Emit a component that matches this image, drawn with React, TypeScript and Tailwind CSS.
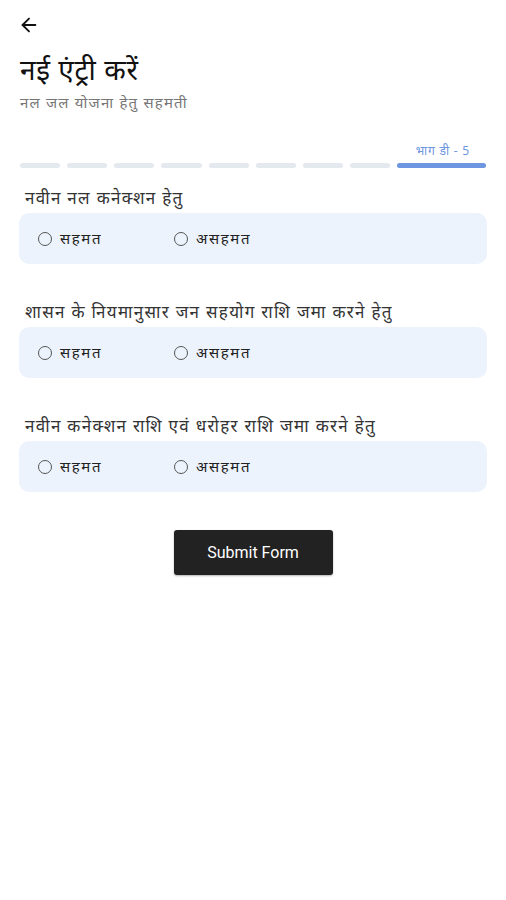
import { ArrowLeft } from "lucide-react";

const questions = [
  "नवीन नल कनेक्शन हेतु",
  "शासन के नियमानुसार जन सहयोग राशि जमा करने हेतु",
  "नवीन कनेक्शन राशि एवं धरोहर राशि जमा करने हेतु",
];

function Radio({ label }: { label: string }) {
  return (
    <label className="flex items-center gap-[8px]">
      <span className="w-[14px] h-[14px] rounded-full border-[1.5px] border-[#555]" />
      <span className="text-[15px] tracking-[1.6px] text-[#222]">{label}</span>
    </label>
  );
}

export default function App() {
  return (
    <div className="w-[506px] h-[900px] bg-white font-['Noto_Sans',sans-serif]">
      <div className="px-[18px] pt-[14px]">
        <ArrowLeft size={22} strokeWidth={2} className="text-[#111]" />
      </div>

      <div className="px-[20px] pt-[16px]">
        <h1 className="text-[28px] leading-[34px] tracking-[0.6px] text-[#111]">नई एंट्री करें</h1>
        <p className="text-[15px] leading-[22px] tracking-[1.2px] text-[#777] mt-[5px]">नल जल योजना हेतु सहमती</p>
      </div>

      {/* progress */}
      <div className="px-[20px] mt-[30px]">
        <div className="flex justify-end pr-[16px]">
          <span className="text-[12px] leading-[16px] tracking-[0.8px] text-[#6d95e0]">भाग डी - 5</span>
        </div>
        <div className="flex gap-[7px] mt-[4px]">
          {Array.from({ length: 8 }).map((_, i) => (
            <div key={i} className="flex-1 h-[5px] rounded-full bg-[#e4e9f0]" />
          ))}
          <div className="w-[89px] h-[5px] rounded-full bg-[#6d95e0]" />
        </div>
      </div>

      <div className="px-[19px] mt-[19px] flex flex-col gap-[37px]">
        {questions.map((q) => (
          <div key={q}>
            <div className="px-[6px] text-[17px] leading-[22px] tracking-[1.3px] text-[#333]">{q}</div>
            <div className="mt-[4px] h-[51px] rounded-[10px] bg-[#edf3fc] flex items-center px-[19px]">
              <div className="w-[136px]">
                <Radio label="सहमत" />
              </div>
              <Radio label="असहमत" />
            </div>
          </div>
        ))}
      </div>

      <div className="flex justify-center mt-[38px]">
        <button className="w-[159px] h-[45px] rounded-[3px] bg-[#222] text-white text-[16px] font-['Roboto',sans-serif] shadow-[0_1px_2px_rgba(0,0,0,0.3)]">
          Submit Form
        </button>
      </div>
    </div>
  );
}
